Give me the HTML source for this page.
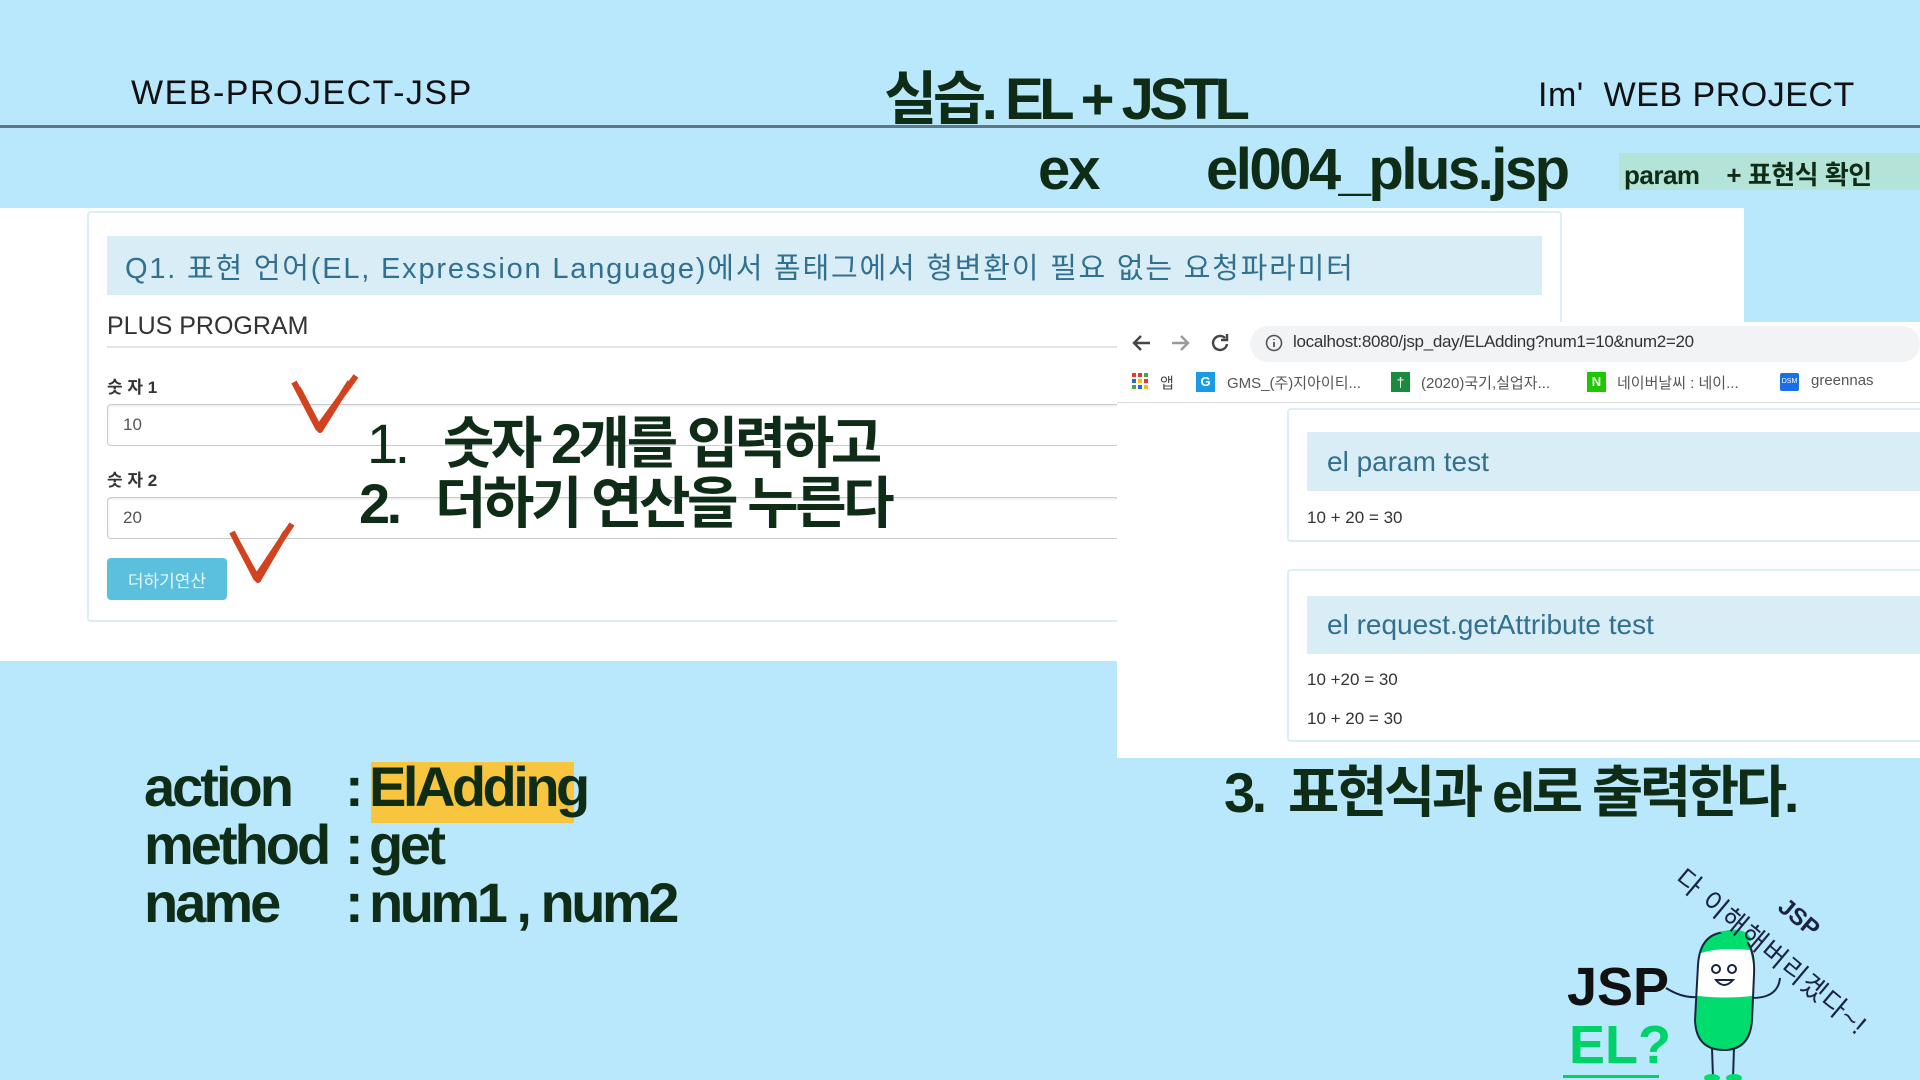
<!DOCTYPE html>
<html><head><meta charset="utf-8"><style>
*{margin:0;padding:0;box-sizing:border-box}
body{width:1920px;height:1080px;overflow:hidden;background:#b9e7fc;position:relative;font-family:"Liberation Sans","Noto Sans CJK KR",sans-serif}
.a{position:absolute;white-space:nowrap}
.dk{color:#0f2c17;font-weight:bold}
.lbl{font-size:17px;font-weight:bold;color:#333}
.inp{border:1px solid #ccc;border-radius:4px;background:#fff;box-shadow:inset 0 1px 2px rgba(0,0,0,.1);font-size:17px;color:#555;padding-left:15px;display:flex;align-items:center}
.hd{background:#d9edf7;color:#31708f;font-size:28px;display:flex;align-items:center;padding-left:20px}
.sm{font-size:17px;color:#333}
</style></head><body>
<div class="a" style="left:131px;top:74px;font-size:34px;color:#111;letter-spacing:1.5px">WEB-PROJECT-JSP</div>
<div class="a dk" style="left:884px;top:52px;font-size:58px;letter-spacing:-4.5px">실습. EL + JSTL</div>
<div class="a" style="left:1538px;top:76px;font-size:34px;color:#111;letter-spacing:0.5px">Im'&nbsp; WEB PROJECT</div>
<div class="a" style="left:0;top:125px;width:1920px;height:3px;background:#5f7884"></div>
<div class="a dk" style="left:1038px;top:136px;font-size:58px;letter-spacing:-2px">ex</div>
<div class="a dk" style="left:1206px;top:136px;font-size:58px;letter-spacing:-2.5px">el004_plus.jsp</div>
<div class="a" style="left:1619px;top:153px;width:301px;height:37px;background:#b4e3d8"></div>
<div class="a dk" style="left:1624px;top:155px;font-size:26px;letter-spacing:-0.5px">param &nbsp;&nbsp;&nbsp;+ 표현식 확인</div>

<div class="a" style="left:0;top:208px;width:1744px;height:453px;background:#fff"></div>
<div class="a" style="left:87px;top:211px;width:1475px;height:411px;border:2px solid #dcedf4;border-radius:4px"></div>
<div class="a hd" style="left:107px;top:236px;width:1435px;height:59px;font-size:29px;letter-spacing:1.8px;padding-left:18px">Q1. 표현 언어(EL, Expression Language)에서 폼태그에서 형변환이 필요 없는 요청파라미터</div>
<div class="a" style="left:107px;top:312px;font-size:25px;color:#333">PLUS PROGRAM</div>
<div class="a" style="left:107px;top:346px;width:1010px;height:2px;background:#e5e5e5"></div>
<div class="a lbl" style="left:107px;top:373px">숫 자 1</div>
<div class="a inp" style="left:107px;top:404px;width:1030px;height:42px">10</div>
<div class="a lbl" style="left:107px;top:466px">숫 자 2</div>
<div class="a inp" style="left:107px;top:497px;width:1030px;height:42px">20</div>
<div class="a" style="left:107px;top:558px;width:120px;height:42px;background:#5bc0de;border-radius:4px;color:#e8f7fc;font-size:17px;display:flex;align-items:center;justify-content:center">더하기연산</div>
<svg class="a" style="left:290px;top:372px" width="72" height="64"><path d="M4 10 L28 56 L66 4 M8 16 L30 58 L60 10" stroke="#d2421e" stroke-width="6" fill="none" stroke-linejoin="round"/></svg>
<svg class="a" style="left:228px;top:520px" width="72" height="64"><path d="M4 12 L28 58 L64 4 M8 20 L30 60 L58 12" stroke="#d2421e" stroke-width="6" fill="none" stroke-linejoin="round"/></svg>

<div class="a" style="left:1117px;top:322px;width:803px;height:436px;background:#fff"></div>
<div class="a" style="left:1250px;top:326px;width:670px;height:36px;background:#f1f3f4;border-radius:18px"></div>
<svg class="a" style="left:1130px;top:331px" width="110" height="24" fill="none" stroke-width="2.4"><path d="M20 12H5M11 5l-7 7 7 7" stroke="#444"/><path d="M42 12h15M51 5l7 7-7 7" stroke="#999"/><path d="M95 7a7 7 0 1 0 2 6M97 3v6h-6" stroke="#444"/></svg>
<svg class="a" style="left:1265px;top:334px" width="20" height="20"><circle cx="9" cy="9" r="7.5" stroke="#555" stroke-width="1.6" fill="none"/><path d="M9 8v5M9 5v1" stroke="#555" stroke-width="1.8"/></svg>
<div class="a" style="left:1293px;top:332px;font-size:17px;color:#333;letter-spacing:-0.3px">localhost:8080/jsp_day/ELAdding?num1=10&amp;num2=20</div>
<svg class="a" style="left:1132px;top:373px" width="18" height="18"><g><rect x="0" y="0" width="4" height="4" fill="#e33"/><rect x="6" y="0" width="4" height="4" fill="#e33"/><rect x="12" y="0" width="4" height="4" fill="#4a4"/><rect x="0" y="6" width="4" height="4" fill="#36c"/><rect x="6" y="6" width="4" height="4" fill="#fb0"/><rect x="12" y="6" width="4" height="4" fill="#e33"/><rect x="0" y="12" width="4" height="4" fill="#4a4"/><rect x="6" y="12" width="4" height="4" fill="#36c"/><rect x="12" y="12" width="4" height="4" fill="#fb0"/></g></svg>
<div class="a" style="left:1160px;top:372px;font-size:15px;color:#444">앱</div>
<div class="a" style="left:1196px;top:372px;width:19px;height:20px;background:#1a9be8;color:#fff;font-size:13px;font-weight:bold;text-align:center;line-height:20px">G</div>
<div class="a" style="left:1227px;top:372px;font-size:15px;color:#555">GMS_(주)지아이티...</div>
<div class="a" style="left:1391px;top:372px;width:19px;height:20px;background:#1a8a3c;color:#fff;font-size:14px;text-align:center;line-height:20px">†</div>
<div class="a" style="left:1421px;top:372px;font-size:15px;color:#555">(2020)국기,실업자...</div>
<div class="a" style="left:1587px;top:372px;width:19px;height:20px;background:#1ec800;color:#fff;font-size:13px;font-weight:bold;text-align:center;line-height:20px">N</div>
<div class="a" style="left:1617px;top:372px;font-size:15px;color:#555">네이버날씨 : 네이...</div>
<div class="a" style="left:1780px;top:373px;width:19px;height:18px;background:#1a6ee8;border-radius:2px;color:#fff;font-size:7px;text-align:center;line-height:18px">DSM</div>
<div class="a" style="left:1811px;top:372px;font-size:15px;color:#555">greennas</div>
<div class="a" style="left:1117px;top:402px;width:803px;height:1px;background:#ddd"></div>

<div class="a" style="left:1287px;top:408px;width:640px;height:134px;border:2px solid #dcedf4;border-radius:4px"></div>
<div class="a hd" style="left:1307px;top:432px;width:613px;height:59px">el param test</div>
<div class="a sm" style="left:1307px;top:508px">10 + 20 = 30</div>
<div class="a" style="left:1287px;top:569px;width:640px;height:173px;border:2px solid #dcedf4;border-radius:4px"></div>
<div class="a hd" style="left:1307px;top:596px;width:613px;height:58px">el request.getAttribute test</div>
<div class="a sm" style="left:1307px;top:670px">10 +20 = 30</div>
<div class="a sm" style="left:1307px;top:709px">10 + 20 = 30</div>

<div class="a dk" style="left:367px;top:399px;font-size:56px;letter-spacing:-3.5px"><span style="font-weight:normal">1.</span>&nbsp;&nbsp; 숫자 2개를 입력하고</div>
<div class="a dk" style="left:359px;top:459px;font-size:56px;letter-spacing:-3.5px">2.&nbsp;&nbsp; 더하기 연산을 누른다</div>

<div class="a" style="left:371px;top:762px;width:203px;height:61px;background:#f8c53f"></div>
<div class="a dk" style="left:144px;top:758px;font-size:56px;letter-spacing:-3px;line-height:58px">action<br>method<br>name</div>
<div class="a dk" style="left:345px;top:758px;font-size:56px;line-height:58px">:<br>:<br>:</div>
<div class="a dk" style="left:369px;top:758px;font-size:56px;letter-spacing:-3.5px;line-height:58px">ElAdding<br>get<br>num1 , num2</div>
<div class="a dk" style="left:1224px;top:748px;font-size:56px;letter-spacing:-3.5px">3.&nbsp; 표현식과 el로 출력한다.</div>

<div class="a" style="left:1567px;top:956px;font-size:54px;font-weight:bold;color:#111">JSP</div>
<div class="a" style="left:1569px;top:1014px;font-size:54px;font-weight:bold;color:#00d26a">EL?</div>
<div class="a" style="left:1563px;top:1075px;width:96px;height:3px;background:#00d26a"></div>
<svg class="a" style="left:1660px;top:920px" width="140" height="160">
<defs><clipPath id="bc"><path d="M38 45 Q40 12 68 12 Q96 14 94 55 L92 100 Q90 130 64 130 Q36 130 35 100 Z"/></clipPath></defs>
<path d="M6 68 Q22 78 36 77" stroke="#1a2440" stroke-width="2" fill="none"/>
<path d="M120 58 Q118 78 92 78" stroke="#1a2440" stroke-width="2" fill="none"/>
<path d="M52 128 L53 158 M74 128 L73 158" stroke="#1a2440" stroke-width="2"/>
<ellipse cx="52" cy="158" rx="8" ry="4" fill="#00dc6e"/><ellipse cx="74" cy="158" rx="8" ry="4" fill="#00dc6e"/>
<g clip-path="url(#bc)"><rect x="0" y="0" width="140" height="140" fill="#00dc6e"/><path d="M30 75 L30 38 Q50 26 90 30 L100 75 Q64 80 30 75Z" fill="#fff"/></g>
<path d="M38 45 Q40 12 68 12 Q96 14 94 55 L92 100 Q90 130 64 130 Q36 130 35 100 Z" fill="none" stroke="#1a2440" stroke-width="2"/>
<path d="M60 12 Q85 5 92 20 L80 26 Z" fill="#00dc6e"/>
<circle cx="56" cy="49" r="4" fill="none" stroke="#1a2440" stroke-width="2"/><circle cx="72" cy="49" r="4" fill="none" stroke="#1a2440" stroke-width="2"/>
<path d="M56 60 Q64 70 73 60 Z" fill="#fff" stroke="#1a2440" stroke-width="2"/>
</svg>
<div class="a" style="left:1693px;top:858px;font-size:27px;color:#1a2440;transform:rotate(40deg);transform-origin:0 0;letter-spacing:1px">다 이해해버리겠다~!</div>
<div class="a" style="left:1790px;top:893px;font-size:24px;font-weight:bold;color:#1a2440;transform:rotate(40deg);transform-origin:0 0">JSP</div>
</body></html>
